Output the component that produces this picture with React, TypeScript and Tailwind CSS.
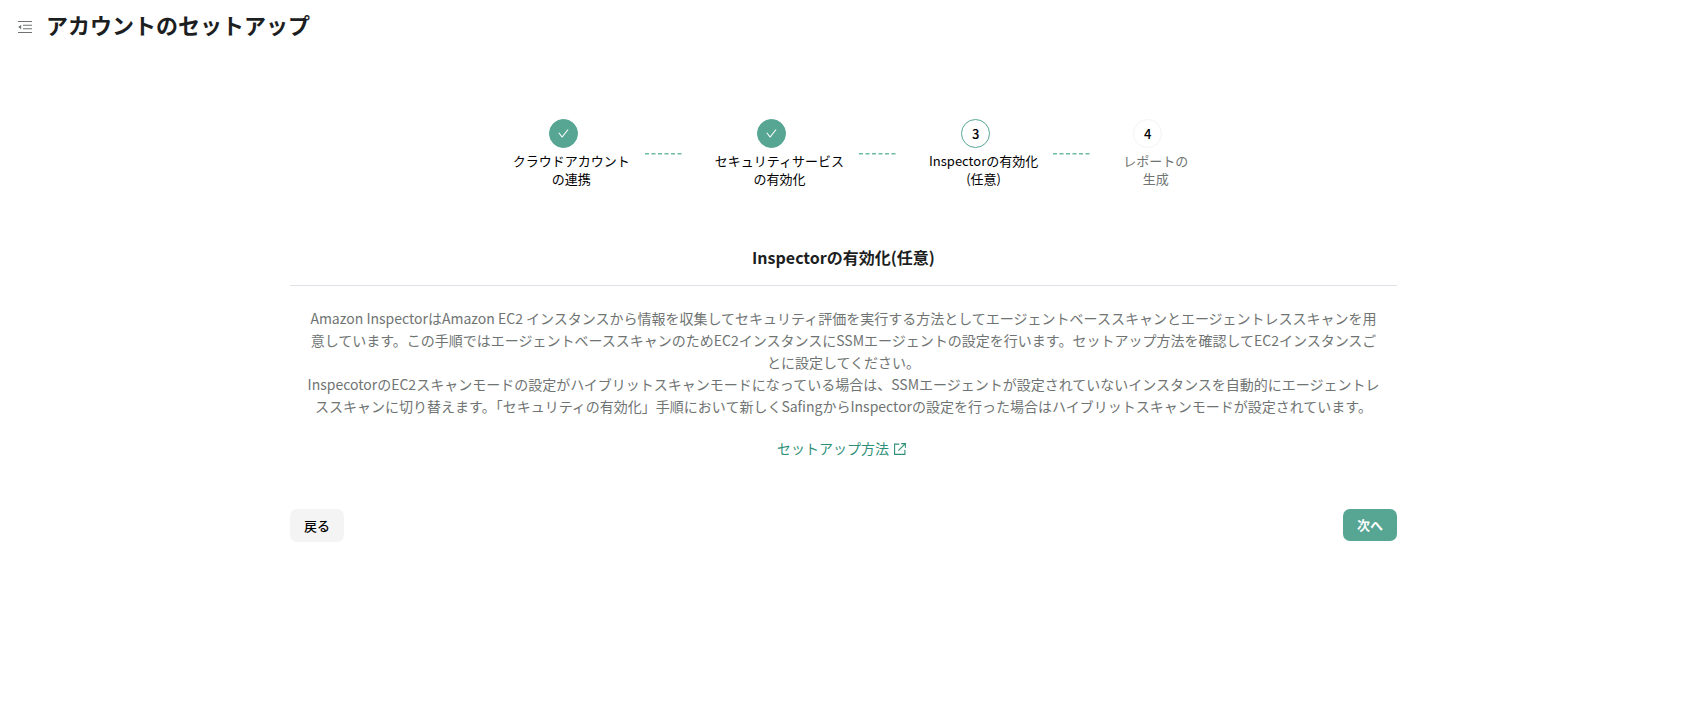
import { AiOutlineCheck } from "react-icons/ai";

type Step = {
  lines: string[];
  status: "done" | "active" | "todo";
};

const steps: Step[] = [
  { lines: ["クラウドアカウント", "の連携"], status: "done" },
  { lines: ["セキュリティサービス", "の有効化"], status: "done" },
  { lines: ["Inspectorの有効化", "(任意)"], status: "active" },
  { lines: ["レポートの", "生成"], status: "todo" },
];

const circleStyles = {
  done: "border-[#56a693] bg-[#56a693] text-white",
  active: "border-[#56a693] bg-white text-black",
  todo: "border-gray-100 bg-white text-black",
};

function MenuFoldIcon() {
  return (
    <svg width="14" height="14" viewBox="0 0 14 14" fill="none" stroke="currentColor" strokeWidth="1.1">
      <path d="M0 1.5H14M5 5.2H14M5 8.8H14M0 12.5H14" />
      <path d="M.2 7 3.2 4.8v4.4z" fill="currentColor" stroke="none" />
    </svg>
  );
}

function ExternalLinkIcon() {
  return (
    <svg width="12" height="12" viewBox="0 0 12 12" fill="none" stroke="currentColor" strokeWidth="1.1">
      <path d="M5.2 1.1H.6V11.4H10.9V6.8" />
      <path d="M7.2.6H11.4V4.8M11.3.7 4.3 7.7" />
    </svg>
  );
}

function StepItem({ step, number }: { step: Step; number: number }) {
  return (
    <li className="flex flex-col items-center">
      <span
        className={`mr-4 mb-1 flex size-[29px] items-center justify-center rounded-full border text-[13px] font-medium ${circleStyles[step.status]}`}
      >
        {step.status === "done" ? <AiOutlineCheck className="size-[13px]" /> : number}
      </span>
      <span
        className={`text-center text-[13px] leading-[18px] whitespace-nowrap ${step.status === "todo" ? "text-[#6f7473]" : "text-black"}`}
      >
        {step.lines[0]}
        <br />
        {step.lines[1]}
      </span>
    </li>
  );
}

function Connector() {
  return (
    <li aria-hidden="true" className="mr-8 ml-[15px] pt-[34px]">
      <svg width="38" height="2" viewBox="0 0 38 2" className="block">
        <path d="M0 .7H38" stroke="#6dbba5" strokeWidth="1.4" strokeDasharray="4 2.5" />
      </svg>
    </li>
  );
}

export default function App() {
  return (
    <div className="min-h-screen bg-white font-['Noto_Sans_CJK_JP',sans-serif] text-[#1c1e21]">
      {/* Header */}
      <header className="flex items-center gap-[14px] px-[18px] pt-2">
        <button type="button" aria-label="メニュー" className="pt-1 text-[#6f7473]">
          <MenuFoldIcon />
        </button>
        <h1 className="text-[22px] leading-[33px] font-bold">アカウントのセットアップ</h1>
      </header>

      <div className="pt-[78px] pl-1">
        <main className="mx-auto w-2/3 max-w-[1107px]">
          {/* Progress */}
          <ol className="flex justify-center pl-[14px]">
            {steps.map((step, i) => [
              i > 0 && <Connector key={`line-${i}`} />,
              <StepItem key={i} step={step} number={i + 1} />,
            ])}
          </ol>

          {/* Content */}
          <section className="mt-[57px] text-center">
            <h2 className="border-b border-[#dee2e6] pb-4 text-base leading-6 font-bold">
              Inspectorの有効化(任意)
            </h2>
            <div className="px-4 pt-[21px] text-[14px] leading-[22px] text-[#6f7473]">
              <p>
                Amazon InspectorはAmazon EC2 インスタンスから情報を収集してセキュリティ評価を実行する方法としてエージェントベーススキャンとエージェントレススキャンを用意しています。この手順ではエージェントベーススキャンのためEC2インスタンスにSSMエージェントの設定を行います。セットアップ方法を確認してEC2インスタンスごとに設定してください。
              </p>
              <p>
                InspecotorのEC2スキャンモードの設定がハイブリットスキャンモードになっている場合は、SSMエージェントが設定されていないインスタンスを自動的にエージェントレススキャンに切り替えます。「セキュリティの有効化」手順において新しくSafingからInspectorの設定を行った場合はハイブリットスキャンモードが設定されています。
              </p>
              <a href="#setup" className="mt-5 mr-1 inline-flex items-end gap-[5px] text-[#2f9079]">
                セットアップ方法
                <span className="pb-1">
                  <ExternalLinkIcon />
                </span>
              </a>
            </div>
          </section>

          {/* Actions */}
          <div className="mt-[50px] flex items-start justify-between text-[13px] font-medium">
            <button type="button" className="h-[33px] rounded-[7px] bg-[#f4f4f4] px-[14px] text-black">
              戻る
            </button>
            <button type="button" className="h-8 rounded-[7px] bg-[#56a693] px-[14px] font-bold text-white">
              次へ
            </button>
          </div>
        </main>
      </div>
    </div>
  );
}
